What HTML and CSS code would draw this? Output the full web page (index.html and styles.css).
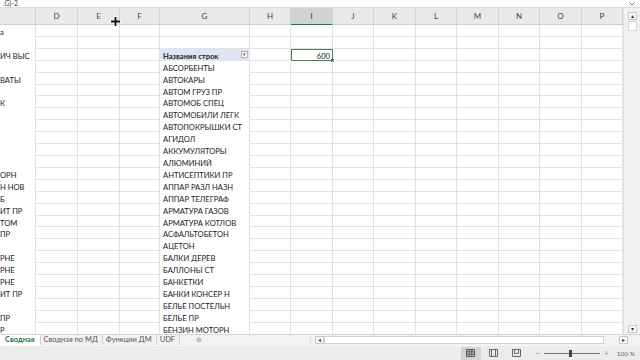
FILE: index.html
```html
<!DOCTYPE html>
<html lang="ru">
<head>
  <meta charset="UTF-8" />
  <title>Сводная</title>
  <link rel="stylesheet" href="styles.css">
</head>
<body>
  <div class="app">
    <div class="formula">
      <span class="formula-text">.G)-2</span>
      <svg class="formula-caret" width="6" height="4" viewBox="0 0 6 4"><path d="M0.5 0.5l2.5 2.5l2.5-2.5" fill="none" stroke="#666"/></svg>
    </div>

    <div class="sheet">
      <div class="grid" id="grid"></div>
      <div class="vscroll">
        <div class="arrow-box">&#9652;</div>
        <div class="vthumb"></div>
        <div class="vtrack"></div>
        <div class="arrow-box">&#9662;</div>
      </div>
      <!-- cell cursor -->
      <svg class="cursor" width="11" height="11" viewBox="0 0 11 11">
        <path d="M4 0h3v4h4v3H7v4H4V7H0V4h4z" fill="#fff"/>
        <path d="M4.6 1h1.8v3.6H10v1.8H6.4V10H4.6V6.4H1V4.6h3.6z" fill="#111"/>
      </svg>
    </div>

    <div class="tabbar">
      <div class="tabs">
        <span class="tab active">Сводная</span>
        <span class="tab">Сводная по МД</span>
        <span class="tab">Функции ДМ</span>
        <span class="tab">UDF</span>
        <span class="tab-add">&#8853;</span>
      </div>
      <span class="tab-dots">&#8942;</span>
      <div class="hscroll">
        <div class="arrow-box">&#9666;</div>
        <div class="hthumb"></div>
        <div class="htrack"></div>
        <div class="arrow-box">&#9656;</div>
      </div>
    </div>

    <div class="statusbar">
      <span class="view active">
        <svg width="9" height="8" viewBox="0 0 9 8"><path d="M0.5 0.5h8v7h-8zM0.5 2.8h8M0.5 5.2h8M3.2 0.5v7M5.8 0.5v7" fill="none" stroke="#555"/></svg>
      </span>
      <span class="view">
        <svg width="9" height="8" viewBox="0 0 9 8"><path d="M0.5 0.5h8v7h-8zM2.5 0.5v7M6.5 0.5v7" fill="none" stroke="#666"/></svg>
      </span>
      <span class="view">
        <svg width="9" height="8" viewBox="0 0 9 8"><path d="M0.5 0.5h8v7h-8zM2.5 0.5v4h4v-4" fill="none" stroke="#666"/></svg>
      </span>
      <div class="zoom">
        <span class="zoom-sign">&minus;</span>
        <span class="slider"><span class="knob"></span></span>
        <span class="zoom-sign">+</span>
        <span class="zoom-value">100 %</span>
      </div>
    </div>
  </div>

  <script>
    const cols = [36, 42, 42, 40, 90, 41, 42, 41, 42, 41, 42, 41, 42, 41];
    const letters = ["", "D", "E", "F", "G", "H", "I", "J", "K", "L", "M", "N", "O", "P"];

    // text spilling in from the hidden columns on the left
    const spill = {
      0: "а", 2: "ИЧ ВЫС", 4: "ВАТЫ", 6: "К", 12: "ОРН", 13: "Н НОВ", 14: "Б",
      15: "ИТ ПР", 16: "ТОМ", 17: "ПР", 19: "РНЕ", 20: "РНЕ", 21: "РНЕ",
      22: "ИТ ПР", 24: "ПР", 25: "Р"
    };

    const items = [
      "АБСОРБЕНТЫ", "АВТОКАРЫ", "АВТОМ ГРУЗ ПР", "АВТОМОБ СПЕЦ", "АВТОМОБИЛИ ЛЕГК",
      "АВТОПОКРЫШКИ СТ", "АГИДОЛ", "АККУМУЛЯТОРЫ", "АЛЮМИНИЙ", "АНТИСЕПТИКИ ПР",
      "АППАР РАЗЛ НАЗН", "АППАР ТЕЛЕГРАФ", "АРМАТУРА ГАЗОВ", "АРМАТУРА КОТЛОВ",
      "АСФАЛЬТОБЕТОН", "АЦЕТОН", "БАЛКИ ДЕРЕВ", "БАЛЛОНЫ СТ", "БАНКЕТКИ",
      "БАНКИ КОНСЕР Н", "БЕЛЬЕ ПОСТЕЛЬН", "БЕЛЬЕ ПР", "БЕНЗИН МОТОРН"
    ];

    const grid = document.getElementById("grid");
    grid.style.gridTemplateColumns = cols.map(w => w + "px").join(" ");

    letters.forEach((l, i) => {
      const h = document.createElement("div");
      h.className = "hdr" + (l === "I" ? " hdr-sel" : "");
      h.textContent = l;
      grid.appendChild(h);
    });

    for (let r = 0; r < 26; r++) {
      cols.forEach((w, c) => {
        const cell = document.createElement("div");
        cell.className = "cell";
        if (c === 0) {
          cell.classList.add("spill");
          cell.textContent = spill[r] || "";
        }
        if (c === 4 && r === 2) {
          cell.classList.add("pivot-head");
          cell.innerHTML = 'Названия строк<span class="filter">&#9662;</span>';
        } else if (c === 4 && r > 2) {
          cell.classList.add("pivot");
          cell.textContent = items[r - 3] || "";
        }
        if (c === 6 && r === 2) {
          cell.classList.add("num", "selected");
          cell.innerHTML = '600<span class="handle"></span>';
        }
        grid.appendChild(cell);
      });
    }
  </script>
</body>
</html>
```

FILE: styles.css
```css
* {
  box-sizing: border-box;
}

body {
  margin: 0;
  font-family: Lato, "Noto Sans", sans-serif;
  color: #222;
  background: #fff;
}

.app {
  width: 640px;
  height: 360px;
  display: flex;
  flex-direction: column;
  overflow: hidden;
}

.formula {
  height: 8px;
  flex: none;
  display: flex;
  justify-content: space-between;
  align-items: center;
  padding: 0 5px 0 3px;
  border-bottom: 1px solid #dadada;
  font-size: 7px;
  line-height: 7px;
  color: #444;
}

.sheet {
  position: relative;
  flex: none;
  height: 326px;
  display: flex;
}

.grid {
  width: 623px;
  display: grid;
  grid-template-rows: 17px;
  grid-auto-rows: 11.91px;
  font-size: 7.6px;
  overflow: hidden;
}

.hdr {
  background: #e9e9e9;
  border-right: 1px solid #d2d2d2;
  border-bottom: 1px solid #cfcfcf;
  text-align: center;
  font-size: 8px;
  line-height: 17px;
  color: #444;
}

.hdr-sel {
  background: #d3d3d3;
  border-bottom: 1px solid #217346;
  color: #222;
}

.cell {
  border-right: 1px solid #e2e2e2;
  border-bottom: 1px solid #e2e2e2;
  padding-top: 2px;
  line-height: 10px;
  white-space: nowrap;
  overflow: hidden;
  position: relative;
}

.spill {
  border-bottom-color: transparent;
}

.pivot,
.pivot-head {
  border-bottom-color: transparent;
  padding-left: 3px;
  background: #fff;
}

.pivot-head {
  background: #dde6f2;
  font-weight: 700;
  border-bottom-color: #dde6f2;
}

.filter {
  position: absolute;
  right: 1px;
  top: 2px;
  width: 7px;
  height: 7px;
  border: 1px solid #b4b4b4;
  background: #fff;
  font-size: 5px;
  line-height: 5px;
  text-align: center;
  color: #777;
}

.num {
  text-align: right;
  padding-right: 2px;
}

.selected {
  overflow: visible;
  outline: 1px solid #4a7f5a;
  outline-offset: -1px;
}

.handle {
  position: absolute;
  right: -2px;
  bottom: -2px;
  width: 3px;
  height: 3px;
  background: #217346;
}

.vscroll {
  flex: 1;
  background: #f0f0f0;
  border-left: 1px solid #e2e2e2;
  display: flex;
  flex-direction: column;
  align-items: center;
  padding: 4px 0 1px;
}

.arrow-box {
  width: 9px;
  height: 8px;
  border: 1px solid #c8c8c8;
  background: #fafafa;
  font-size: 6px;
  line-height: 6px;
  text-align: center;
  color: #333;
}

.vthumb {
  width: 9px;
  height: 10px;
  margin-top: 1px;
  background: #fff;
  border: 1px solid #d8d8d8;
}

.vtrack {
  flex: 1;
}

.cursor {
  position: absolute;
  left: 110px;
  top: 8px;
}

.tabbar {
  height: 11px;
  flex: none;
  display: flex;
  align-items: stretch;
  background: #f2f2f2;
  border-top: 1px solid #d6d6d6;
  font-size: 7.5px;
  line-height: 9px;
  color: #555;
}

.tabs {
  width: 306px;
  display: flex;
  align-items: stretch;
}

.tab {
  padding: 0 4px 0 3px;
  border-right: 1px solid #d0d0d0;
}

.tab.active {
  background: #fff;
  color: #217346;
  font-weight: 700;
  padding: 0 5px 0 5px;
}

.tab-add {
  margin-left: 16px;
  color: #999;
  font-size: 7px;
}

.tab-dots {
  width: 9px;
  color: #aaa;
  font-size: 7px;
  text-align: center;
}

.hscroll {
  flex: 1;
  display: flex;
  align-items: center;
  padding-right: 12px;
}

.hthumb {
  width: 280px;
  height: 8px;
  background: #fff;
  border: 1px solid #d0d0d0;
}

.htrack {
  flex: 1;
}

.statusbar {
  flex: 1;
  display: flex;
  align-items: center;
  justify-content: flex-end;
  background: #ececec;
  border-top: 1px solid #f8f8f8;
  padding-right: 5px;
  font-size: 6.5px;
  color: #666;
}

.view {
  width: 20px;
  height: 13px;
  display: flex;
  align-items: center;
  justify-content: center;
  margin-right: 3px;
}

.view.active {
  background: #d4d4d4;
}

.zoom {
  display: flex;
  align-items: center;
  margin-left: 6px;
}

.zoom-sign {
  font-size: 8px;
  color: #888;
}

.slider {
  position: relative;
  width: 56px;
  height: 1px;
  margin: 0 4px;
  background: #777;
}

.knob {
  position: absolute;
  left: 25px;
  top: -3px;
  width: 3px;
  height: 7px;
  background: #444;
}

.zoom-value {
  margin-left: 8px;
}
```
